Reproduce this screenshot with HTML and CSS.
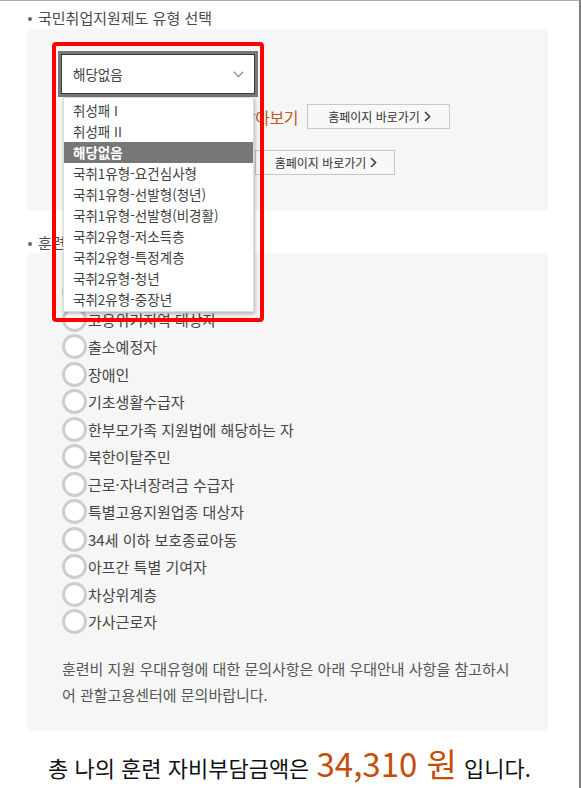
FILE: index.html
```html
<!DOCTYPE html>
<html lang="ko">
<head>
<meta charset="utf-8">
<title>훈련비 자비부담금 계산</title>
<link rel="stylesheet" href="styles.css">
</head>
<body>
<div class="page">
  <h3 class="sec-title">국민취업지원제도 유형 선택</h3>
  <div class="box box-type">
    <div class="select-wrap">
      <div class="select">
        <span class="select-value">해당없음</span>
        <svg class="select-arrow" width="11" height="7" viewBox="0 0 11 7"><path d="M0.8 0.8 L5.5 5.6 L10.2 0.8" fill="none" stroke="#8a8a8a" stroke-width="1.3"/></svg>
      </div>
      <ul class="dropdown">
        <li>취성패 I</li>
        <li>취성패 II</li>
        <li class="active">해당없음</li>
        <li>국취1유형-요건심사형</li>
        <li>국취1유형-선발형(청년)</li>
        <li>국취1유형-선발형(비경활)</li>
        <li>국취2유형-저소득층</li>
        <li>국취2유형-특정계층</li>
        <li>국취2유형-청년</li>
        <li>국취2유형-중장년</li>
      </ul>
      <div class="red-frame"></div>
    </div>
    <div class="link-row">
      <span class="link-label wide">고용센터 찾아보기</span>
      <a class="go-btn">홈페이지 바로가기<svg width="7" height="11" viewBox="0 0 7 11"><path d="M1 1 L5.6 5.5 L1 10" fill="none" stroke="#333" stroke-width="1.5"/></svg></a>
    </div>
    <div class="link-row">
      <span class="link-label narrow">워크넷</span>
      <a class="go-btn small">홈페이지 바로가기<svg width="7" height="11" viewBox="0 0 7 11"><path d="M1 1 L5.6 5.5 L1 10" fill="none" stroke="#333" stroke-width="1.5"/></svg></a>
    </div>
  </div>

  <h3 class="sec-title second">훈련비 지원 우대유형</h3>
  <div class="box box-favor">
    <ul class="radio-list">
      <li><span class="radio"></span>고용보험 미가입자</li>
      <li><span class="radio"></span>고용위기지역 대상자</li>
      <li><span class="radio"></span>출소예정자</li>
      <li><span class="radio"></span>장애인</li>
      <li><span class="radio"></span>기초생활수급자</li>
      <li><span class="radio"></span>한부모가족 지원법에 해당하는 자</li>
      <li><span class="radio"></span>북한이탈주민</li>
      <li><span class="radio"></span>근로·자녀장려금 수급자</li>
      <li><span class="radio"></span>특별고용지원업종 대상자</li>
      <li><span class="radio"></span>34세 이하 보호종료아동</li>
      <li><span class="radio"></span>아프간 특별 기여자</li>
      <li><span class="radio"></span>차상위계층</li>
      <li><span class="radio"></span>가사근로자</li>
    </ul>
    <p class="note">훈련비 지원 우대유형에 대한 문의사항은 아래 우대안내 사항을 참고하시어 관할고용센터에 문의바랍니다.</p>
  </div>

  <p class="total">총 나의 훈련 자비부담금액은 <strong class="amount">34,310 원</strong> 입니다.</p>
</div>
</body>
</html>
```
FILE: styles.css
```css
* { box-sizing: border-box; }
html, body { margin: 0; padding: 0; background: #fff; }
body {
  font-family: "Noto Sans CJK KR", "Noto Sans", sans-serif;
  color: #444;
}
.page {
  width: 581px;
  min-height: 788px;
  border-top: 1px solid #aaaaaa;
  border-right: 2px solid #7f7f7f;
  padding-top: 6px;
  overflow: hidden;
}
.sec-title {
  margin: 0;
  padding-left: 28px;
  font-size: 15px;
  font-weight: normal;
  line-height: 22px;
  color: #4a4a4a;
  display: flex;
  align-items: center;
}
.sec-title::before {
  content: "";
  width: 4px;
  height: 4px;
  border-radius: 50%;
  background: #666;
  margin-right: 6px;
  margin-top: 2px;
}
.sec-title.second { margin-top: 22px; line-height: 21px; }
.box {
  margin-left: 27px;
  width: 521px;
  background: #f6f6f6;
}
.box-type {
  height: 181px;
  padding: 22px 0 0 31px;
  position: relative;
}
.select-wrap {
  position: relative;
  width: 200px;
  height: 46px;
  z-index: 2;
}
.select {
  height: 46px;
  border: 3px solid #777;
  box-shadow: inset 0 0 0 1px #2f3a48;
  background: #fff;
  display: flex;
  align-items: center;
  justify-content: space-between;
  padding: 0 11px 0 12px;
  font-size: 13.5px;
  color: #444;
}
.select-arrow { display: block; margin-top: 1px; }
.dropdown {
  position: absolute;
  top: 46px;
  left: 5px;
  width: 191px;
  margin: 0;
  padding: 2px 0 1px;
  list-style: none;
  background: #fff;
  border: 1px solid #dcdcdc;
  box-shadow: 1px 2px 4px rgba(0,0,0,0.28);
}
.dropdown li {
  height: 21px;
  line-height: 21px;
  padding-left: 9px;
  font-size: 13.5px;
  color: #3f3f3f;
  white-space: nowrap;
}
.dropdown li.active {
  background: #777;
  color: #fff;
  font-weight: bold;
}
.red-frame {
  position: absolute;
  left: -6px;
  top: -9px;
  width: 212px;
  height: 280px;
  border: 4px solid #ff0000;
  border-radius: 4px;
  pointer-events: none;
}
.link-row {
  display: flex;
  align-items: center;
  gap: 9px;
  margin-top: 7px;
}
.link-row + .link-row { margin-top: 21px; }
.link-label {
  text-align: right;
  font-size: 16px;
  letter-spacing: -0.5px;
  color: #bb5a22;
  white-space: nowrap;
}
.link-label.wide { width: 240px; }
.link-label.narrow { width: 188px; }
.go-btn {
  width: 143px;
  height: 25px;
  border: 1px solid #c8c8c8;
  background: #f8f8f8;
  display: flex;
  align-items: center;
  justify-content: center;
  gap: 4px;
  font-size: 12px;
  color: #333;
  padding-left: 2px;
}
.go-btn.small { width: 140px; }
.go-btn svg { display: block; }
.box-favor {
  padding: 25px 31px 23px 35px;
}
.radio-list {
  margin: 0;
  padding: 0;
  list-style: none;
}
.radio-list li {
  height: 27.5px;
  display: flex;
  align-items: center;
  gap: 1px;
  font-size: 15px;
  color: #444;
}
.radio {
  width: 25px;
  height: 25px;
  flex: none;
  border: 3px solid #cdcdcd;
  border-radius: 50%;
  background: #fff;
}
.note {
  margin: 20px 0 0;
  font-size: 15px;
  line-height: 26px;
  color: #555;
  word-break: break-all;
}
.total {
  margin: 10px 0 0;
  padding-left: 48px;
  line-height: 44px;
  font-size: 22px;
  color: #111;
  white-space: nowrap;
}
.amount {
  font-weight: normal;
  font-size: 33px;
  color: #c54d0c;
  margin: 0 1px;
}
```
